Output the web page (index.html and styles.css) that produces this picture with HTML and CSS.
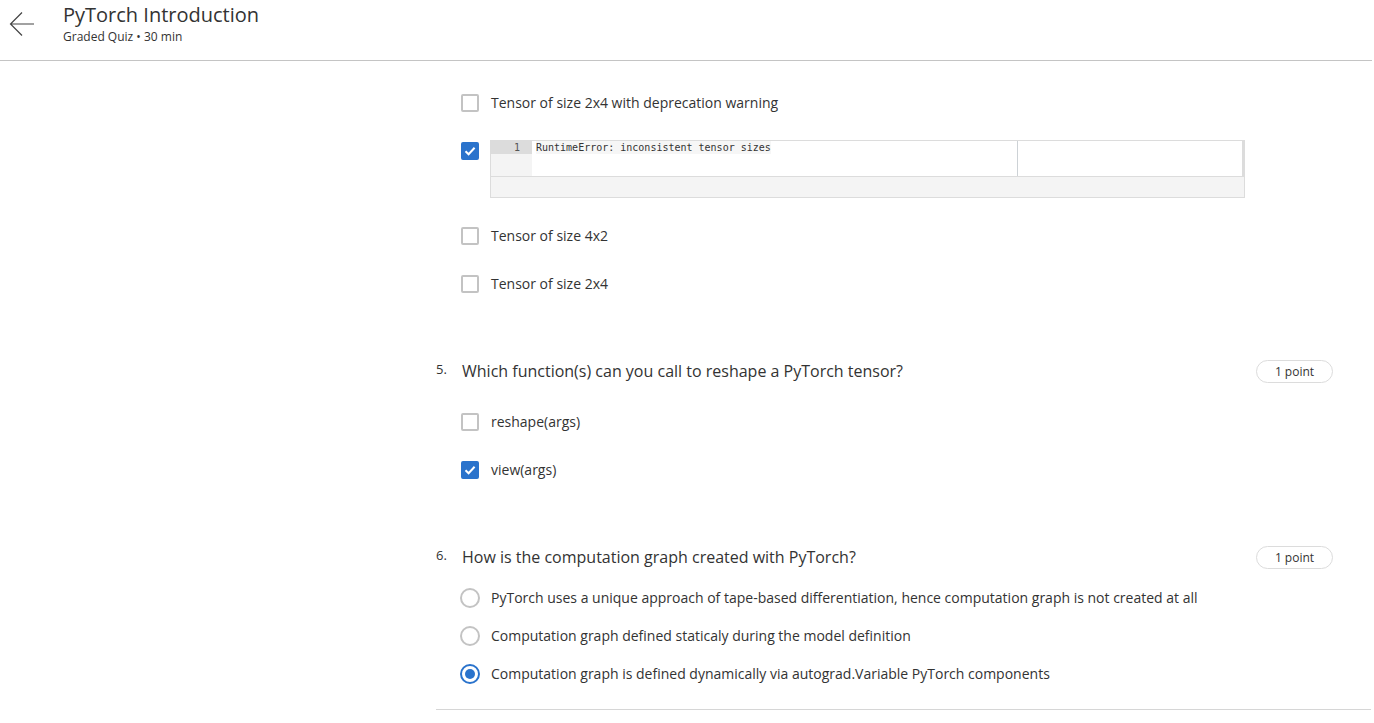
FILE: index.html
```html
<!DOCTYPE html>
<html>
<head>
<meta charset="utf-8">
<link rel="stylesheet" href="styles.css">
</head>
<body>
<header class="topbar">
  <div class="back">
    <svg width="26" height="26" viewBox="0 0 26 26"><path d="M25 13 H2 M13 1.5 L1.5 13 L13 24.5" fill="none" stroke="#444" stroke-width="1.2"/></svg>
  </div>
  <div class="titles">
    <div class="title">PyTorch Introduction</div>
    <div class="subtitle">Graded Quiz • 30 min</div>
  </div>
</header>
<main class="content">
  <div class="options first">
    <div class="opt"><span class="cb"></span><span class="label">Tensor of size 2x4 with deprecation warning</span></div>
    <div class="opt code-opt"><span class="cb checked"><svg width="14" height="14" viewBox="0 0 14 14"><path d="M2.5 7.2 L5.6 10.2 L11.6 3.8" fill="none" stroke="#fff" stroke-width="2"/></svg></span>
      <div class="code">
        <div class="code-main">
          <div class="editor">
            <div class="gutter"><div class="ln">1</div></div>
            <div class="lines"><span class="line">RuntimeError: inconsistent tensor sizes</span></div>
          </div>
          <div class="side"></div>
        </div>
        <div class="code-foot"></div>
      </div>
    </div>
    <div class="opt"><span class="cb"></span><span class="label">Tensor of size 4x2</span></div>
    <div class="opt"><span class="cb"></span><span class="label">Tensor of size 2x4</span></div>
  </div>

  <div class="question q5">
    <span class="num">5.</span><span class="qtext">Which function(s) can you call to reshape a PyTorch tensor?</span>
    <span class="badge">1 point</span>
  </div>
  <div class="options">
    <div class="opt"><span class="cb"></span><span class="label">reshape(args)</span></div>
    <div class="opt"><span class="cb checked"><svg width="14" height="14" viewBox="0 0 14 14"><path d="M2.5 7.2 L5.6 10.2 L11.6 3.8" fill="none" stroke="#fff" stroke-width="2"/></svg></span><span class="label">view(args)</span></div>
  </div>

  <div class="question q6">
    <span class="num">6.</span><span class="qtext">How is the computation graph created with PyTorch?</span>
    <span class="badge">1 point</span>
  </div>
  <div class="radios">
    <div class="opt"><span class="rb"></span><span class="label">PyTorch uses a unique approach of tape-based differentiation, hence computation graph is not created at all</span></div>
    <div class="opt"><span class="rb"></span><span class="label">Computation graph defined staticaly during the model definition</span></div>
    <div class="opt"><span class="rb on"></span><span class="label">Computation graph is defined dynamically via autograd.Variable PyTorch components</span></div>
  </div>
  <div class="endline"></div>
</main>
</body>
</html>
```
FILE: styles.css
```css
* { box-sizing: border-box; }
html, body { margin: 0; padding: 0; background: #fff; }
body { font-family: "Open Sans", "Noto Sans", sans-serif; color: #333; width: 1374px; height: 723px; overflow: hidden; }

.topbar { width: 1372px; height: 61px; border-bottom: 1px solid #c4c4c4; display: flex; align-items: flex-start; }
.back { width: 63px; padding: 11px 0 0 9px; }
.back svg { display: block; }
.titles { padding-top: 1px; }
.title { font-size: 20px; line-height: 27px; color: #333; }
.subtitle { font-size: 12px; line-height: 16px; color: #333; margin-top: 1px; }

.content { margin-left: 436px; width: 935px; }

.options { display: flex; flex-direction: column; gap: 24px; padding-left: 25px; }
.options.first { padding-top: 30px; }
.opt { display: flex; align-items: center; min-height: 24px; }
.label { font-size: 14px; line-height: 24px; color: #333; margin-left: 12px; }

.cb { width: 18px; height: 18px; border: 2px solid #c3c3c3; border-radius: 2px; flex: none; display: flex; align-items: center; justify-content: center; }
.cb.checked { background: #2a73cc; border-color: #2a73cc; }
.cb svg { display: block; }

.code-opt { align-items: flex-start; margin-bottom: 2px; margin-top: 1px; }
.code-opt .cb { margin-top: 2px; }
.code { margin-left: 11px; width: 755px; height: 58px; border: 1px solid #dcdcdc; display: flex; flex-direction: column; }
.code-main { display: flex; height: 36px; border-bottom: 1px solid #dcdcdc; }
.editor { display: flex; width: 526px; }
.gutter { width: 41px; background: #f4f4f4; }
.ln { background: #dcdcdc; height: 13px; font-family: "DejaVu Sans Mono", monospace; font-size: 10px; line-height: 13px; text-align: right; padding-right: 12px; color: #555; }
.lines { flex: 1; padding-left: 4px; font-family: "DejaVu Sans Mono", monospace; font-size: 10px; line-height: 13px; }
.line { color: #333; background: #f6f6f6; display: inline-block; vertical-align: top; line-height: 13px; }
.side { flex: 1; border-left: 1px solid #cdd2d6; border-right: 2px solid #dcdcdc; }
.code-foot { flex: 1; background: #f4f4f4; }

.question { display: flex; align-items: center; height: 24px; }
.q5 { margin-top: 63px; margin-bottom: 27px; }
.q6 { margin-top: 63px; margin-bottom: 17px; }
.num { width: 26px; font-size: 13px; color: #333; align-self: flex-start; line-height: 20px; }
.qtext { font-size: 16px; line-height: 24px; color: #333; flex: 1; }
.badge { width: 77px; height: 23px; border: 1px solid #dcdcdc; border-radius: 12px; font-size: 12px; line-height: 21px; text-align: center; color: #333; margin-right: 38px; }

.radios { display: flex; flex-direction: column; gap: 14px; padding-left: 24px; }
.rb { width: 20px; height: 20px; border: 2px solid #c3c3c3; border-radius: 50%; flex: none; margin-right: 1px; position: relative; }
.rb.on { border-color: #2a73cc; }
.rb.on::after { content: ""; position: absolute; left: 3px; top: 3px; width: 10px; height: 10px; border-radius: 50%; background: #2a73cc; }
.radios .label { margin-left: 10px; }

.endline { margin-top: 23px; border-top: 1px solid #d6d6d6; height: 1px; }
```
